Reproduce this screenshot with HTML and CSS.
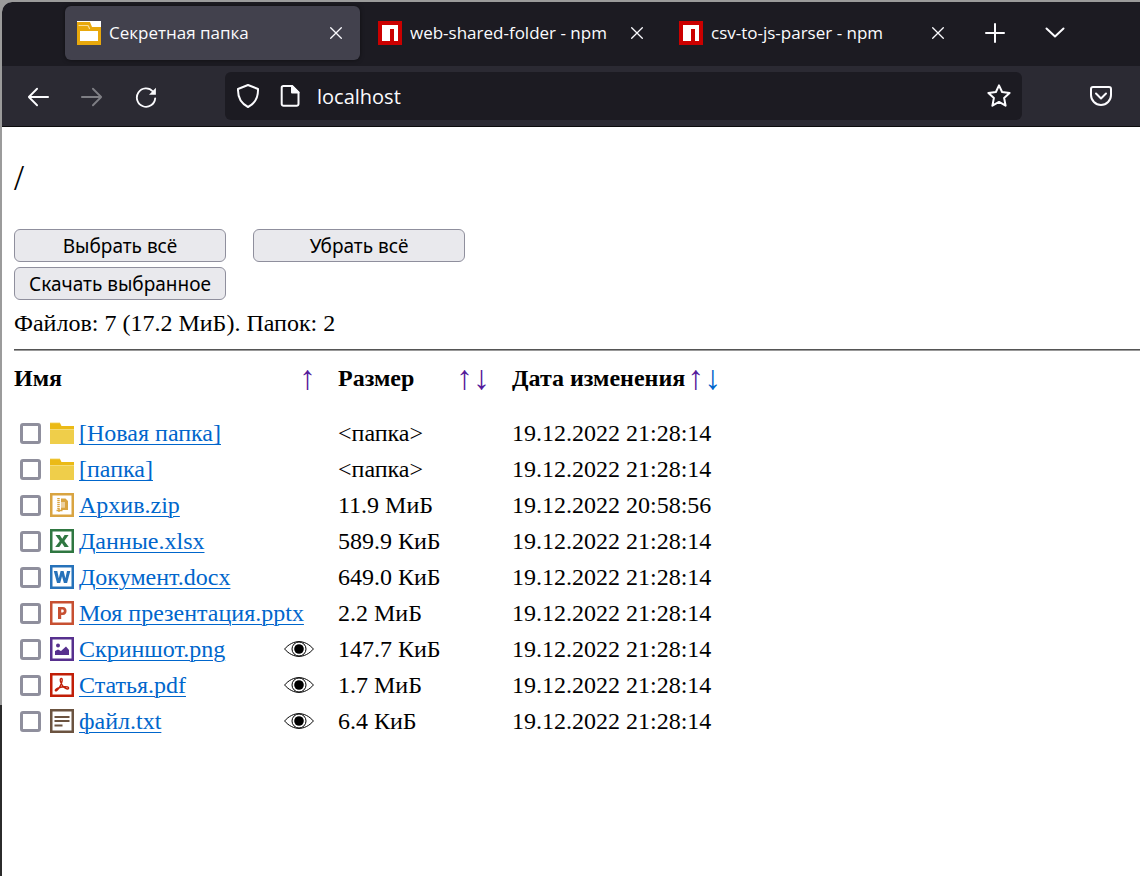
FILE: index.html
```
<!DOCTYPE html>
<html lang="ru">
<head>
<meta charset="utf-8">
<title>Секретная папка</title>
<link rel="stylesheet" href="styles.css">
</head>
<body>
<svg class="symbols" aria-hidden="true">
  <symbol id="close" viewBox="0 0 12 12"><path d="M.7.7l10.6 10.6M11.3.7L.7 11.3" stroke="currentColor" stroke-width="1.3" fill="none"/></symbol>
  <symbol id="npm" viewBox="0 0 24 24"><path fill="#cb0000" d="M0 0h24v24H0z"/><path fill="#fff" d="M4 4h16v16h-4V8h-4v12H4z"/></symbol>
  <symbol id="folder" viewBox="0 0 24 24"><path fill="#ebba16" d="M0 2h10l1.500 3H24v3H0z"/><path fill="#efce4a" d="M0 8.500h24V23H0z"/><path fill="#f5dc78" d="M0 8h24v1H0zM0 1.500h10v.8H0z"/></symbol>
  <symbol id="eye" viewBox="0 0 30 16"><path d="M.6 8C9-1.800 21-1.800 29.400 8 21 17.800 9 17.800.6 8z" fill="#fff" stroke="#000"/><circle cx="15" cy="8" r="7" fill="#fff" stroke="#000"/><circle cx="15" cy="8" r="4.800"/></symbol>
</svg>
<div class="window">
  <header class="chrome">
    <div class="tabs">
      <div class="tab active">
        <svg class="favicon" viewBox="0 0 24 24"><path fill="#fff" d="M0 0h24v24H0z"/><path fill="#e8a80c" d="M0 1h13l2 5h9v18H0z"/><path fill="#fff" d="M3 10h18v10H3z"/><path d="M2 4.500h9l1.500 3" fill="none" stroke="#f9de9a" stroke-width="1.200"/></svg>
        <span class="tab-title">Секретная папка</span>
        <button class="tab-close" aria-label="Закрыть вкладку"><svg><use href="#close"/></svg></button>
      </div>
      <div class="tab">
        <svg class="favicon"><use href="#npm"/></svg>
        <span class="tab-title">web-shared-folder - npm</span>
        <button class="tab-close" aria-label="Закрыть вкладку"><svg><use href="#close"/></svg></button>
      </div>
      <div class="tab">
        <svg class="favicon"><use href="#npm"/></svg>
        <span class="tab-title">csv-to-js-parser - npm</span>
        <button class="tab-close" aria-label="Закрыть вкладку"><svg><use href="#close"/></svg></button>
      </div>
      <button class="tab-tool" aria-label="Новая вкладка"><svg viewBox="0 0 24 24"><path d="M12 3v18M3 12h18"/></svg></button>
      <button class="tab-tool" aria-label="Список вкладок"><svg viewBox="0 0 24 24"><path d="M3.500 7.500l8.500 8 8.500-8"/></svg></button>
    </div>
    <div class="toolbar">
      <nav class="nav">
        <button class="tool" aria-label="Назад"><svg viewBox="0 0 24 24"><path d="M23 12H2M11 3l-9 9 9 9"/></svg></button>
        <button class="tool dim" aria-label="Вперёд"><svg viewBox="0 0 24 24"><path d="M1 12h21M13 3l9 9-9 9"/></svg></button>
        <button class="tool" aria-label="Обновить"><svg viewBox="0 0 24 24"><path d="M19.500 6A10 10 0 1 0 22 13.500"/><path d="M22.800 2v7.500h-7.500z" fill="currentColor" stroke="none"/></svg></button>
      </nav>
      <div class="urlbar">
        <svg class="glyph" viewBox="0 0 24 24"><path d="M12 1L22 5c.3 8-2 14-10 18C4 19 1.700 13 2 5z"/></svg>
        <svg class="glyph" viewBox="0 0 24 24"><path d="M5.500 2H14l6.500 6.500V20a1.800 1.800 0 0 1-1.800 1.800H5.500A1.800 1.800 0 0 1 3.700 20V3.800A1.800 1.800 0 0 1 5.500 2z"/><path d="M14 2v6.500h6.500z" fill="currentColor"/></svg>
        <input class="url" type="text" value="localhost" aria-label="Адрес">
        <button class="star" aria-label="Добавить в закладки"><svg class="glyph" viewBox="0 0 24 24"><path d="M12 1.300l3.100 6.700 7.500.9-5.500 5 1.500 7.800-6.600-3.800-6.600 3.800 1.500-7.800-5.500-5 7.500-.9z"/></svg></button>
      </div>
      <button class="pocket" aria-label="Pocket"><svg class="glyph" viewBox="0 0 24 24"><path d="M4 3h16a2 2 0 0 1 2 2v6a10 10 0 0 1-20 0V5a2 2 0 0 1 2-2z"/><path d="M7 9.500l5 5 5-5"/></svg></button>
    </div>
  </header>
  <main class="page">
    <h1 class="path">/</h1>
    <div class="actions">
      <button class="action">Выбрать всё</button>
      <button class="action">Убрать всё</button>
      <button class="action">Скачать выбранное</button>
    </div>
    <p class="summary">Файлов: 7 (17.2 МиБ). Папок: 2</p>
    <hr class="rule">
    <table class="files">
      <thead>
        <tr>
          <th class="col-name"><div class="head"><span>Имя</span><span class="sort"><a class="visited" href="#">↑</a></span></div></th>
          <th class="col-size"><div class="head"><span>Размер</span><span class="sort"><a class="visited" href="#">↑</a><a class="visited" href="#">↓</a></span></div></th>
          <th class="col-date"><div class="head"><span>Дата изменения</span><span class="sort"><a class="visited" href="#">↑</a><a href="#">↓</a></span></div></th>
        </tr>
      </thead>
      <tbody>
        <tr><td><div class="file"><input type="checkbox" aria-labelledby="f1"><svg class="type"><use href="#folder"/></svg><a id="f1" href="#">[Новая папка]</a></div></td><td>&lt;папка&gt;</td><td>19.12.2022 21:28:14</td></tr>
        <tr><td><div class="file"><input type="checkbox" aria-labelledby="f2"><svg class="type"><use href="#folder"/></svg><a id="f2" href="#">[папка]</a></div></td><td>&lt;папка&gt;</td><td>19.12.2022 21:28:14</td></tr>
        <tr><td><div class="file"><input type="checkbox" aria-labelledby="f3"><svg class="type framed zip" viewBox="0 0 24 24"><path class="frame" d="M1 1h22v22H1z"/><path d="M11 5.500h4.500l2.500 2.500v9h-7v-2.500h4V9h-4z" fill="currentColor"/><path d="M8.500 5v12" stroke="currentColor" stroke-width="2.500" stroke-dasharray="1.200 .8"/><path d="M6.500 17.500h6M9 16v3" stroke="currentColor" stroke-width="1.400"/><path d="M11 9h4v5.500h-4z" fill="currentColor" opacity=".5"/></svg><a id="f3" href="#">Архив.zip</a></div></td><td>11.9 МиБ</td><td>19.12.2022 20:58:56</td></tr>
        <tr><td><div class="file"><input type="checkbox" aria-labelledby="f4"><svg class="type framed xls" viewBox="0 0 24 24"><path class="frame" d="M1 1h22v22H1z"/><path d="M5.500 6h4.300l2.400 3.800L14.600 6h4l-4.300 5.900 4.500 6h-4.300l-2.600-3.900-2.600 3.900H5.200l4.600-6z" fill="currentColor"/></svg><a id="f4" href="#">Данные.xlsx</a></div></td><td>589.9 КиБ</td><td>19.12.2022 21:28:14</td></tr>
        <tr><td><div class="file"><input type="checkbox" aria-labelledby="f5"><svg class="type framed doc" viewBox="0 0 24 24"><path class="frame" d="M1 1h22v22H1z"/><path d="M3.800 6h3.500l1.500 7.300L10.600 6h3l1.800 7.300L17 6h3.300l-3.200 12h-3.200L12 11.200 10.200 18H7z" fill="currentColor"/></svg><a id="f5" href="#">Документ.docx</a></div></td><td>649.0 КиБ</td><td>19.12.2022 21:28:14</td></tr>
        <tr><td><div class="file"><input type="checkbox" aria-labelledby="f6"><svg class="type framed ppt" viewBox="0 0 24 24"><path class="frame" d="M1 1h22v22H1z"/><path d="M8 6h4.800c5 0 5 8 0 8h-1.600v4H8zm3.200 2.600v2.900h1.200c1.900 0 1.900-2.900 0-2.900z" fill="currentColor" fill-rule="evenodd"/></svg><a id="f6" href="#">Моя презентация.pptx</a></div></td><td>2.2 МиБ</td><td>19.12.2022 21:28:14</td></tr>
        <tr><td><div class="file"><input type="checkbox" aria-labelledby="f7"><svg class="type framed png" viewBox="0 0 24 24"><path class="frame" d="M1 1h22v22H1z"/><circle cx="8" cy="8.500" r="2" fill="currentColor"/><path d="M5 18v-4l3-1.500 3 1.500 5-4.500 3 3.500v5z" fill="currentColor"/></svg><a id="f7" href="#">Скриншот.png</a><a class="view" href="#" aria-label="Просмотр"><svg><use href="#eye"/></svg></a></div></td><td>147.7 КиБ</td><td>19.12.2022 21:28:14</td></tr>
        <tr><td><div class="file"><input type="checkbox" aria-labelledby="f8"><svg class="type framed pdf" viewBox="0 0 24 24"><path class="frame" d="M1 1h22v22H1z"/><path d="M11 5.500c2.200-.8 1 4.500-.8 7.500-1.600 3-3.900 5.700-4.800 4.600-.9-1.400 4.500-3.600 8.100-3.900 3-.3 5.500.2 5 1.800-.7 1.600-4.600-.6-6.200-3.200-1.700-2.700-3-6.200-1.300-6.800z" fill="none" stroke="currentColor" stroke-width="1.400"/></svg><a id="f8" href="#">Статья.pdf</a><a class="view" href="#" aria-label="Просмотр"><svg><use href="#eye"/></svg></a></div></td><td>1.7 МиБ</td><td>19.12.2022 21:28:14</td></tr>
        <tr><td><div class="file"><input type="checkbox" aria-labelledby="f9"><svg class="type framed txt" viewBox="0 0 24 24"><path class="frame" d="M1 1h22v22H1z"/><path d="M4.500 8h15M4.500 12h15M4.500 16.500h8" stroke="currentColor" stroke-width="1.800"/></svg><a id="f9" href="#">файл.txt</a><a class="view" href="#" aria-label="Просмотр"><svg><use href="#eye"/></svg></a></div></td><td>6.4 КиБ</td><td>19.12.2022 21:28:14</td></tr>
      </tbody>
    </table>
  </main>
</div>
</body>
</html>
```
FILE: styles.css
```
* { box-sizing: border-box; }
body {
  margin: 0;
  min-height: 100vh;
  padding: 2px 0 0 2px;
  display: flex;
  background: linear-gradient(#9b9b9b 705px, #2b2b2b 705px);
}
button { font: inherit; color: inherit; background: none; border: 0; padding: 0; }
.symbols { position: absolute; width: 0; height: 0; }
.window {
  flex: 1;
  min-width: 0;
  background: #fff;
  border-top-left-radius: 10px;
  overflow: hidden;
  font: 24px/28px "Liberation Serif", serif;
  color: #000;
}
.chrome { font: 17px/24px "Open Sans", "Noto Sans", sans-serif; color: #fbfbfe; }
.chrome svg { fill: none; stroke-linecap: round; stroke-linejoin: round; }
.tabs { display: flex; align-items: center; gap: 6px; height: 64px; padding: 0 0 2px 63px; background: #1c1b22; }
.tab { display: flex; align-items: center; flex: 0 1 295px; height: 54px; padding: 0 12px; border-radius: 6px; }
.tab.active { background: #42414d; box-shadow: 0 0 4px #00000080; }
.favicon { width: 24px; height: 24px; flex: none; margin-right: 8px; }
.tab-title { flex: 1; white-space: nowrap; overflow: hidden; }
.tab-close { width: 24px; height: 24px; display: grid; place-items: center; }
.tab-close svg { width: 12px; height: 12px; }
.tab-tool { width: 54px; height: 54px; display: grid; place-items: center; stroke: currentColor; stroke-width: 2; }
.tab-tool svg { width: 24px; height: 24px; }
.toolbar { display: flex; align-items: center; height: 61px; background: #2b2a33; border-bottom: 1px solid #0c0c0d; }
.nav { display: flex; width: 223px; padding: 2px 0 0 9px; }
.tool { width: 54px; height: 48px; display: grid; place-items: center; stroke: currentColor; stroke-width: 2; }
.tool svg { width: 22px; height: 22px; }
.dim { opacity: .4; }
.urlbar { display: flex; align-items: center; gap: 18px; flex: 1; min-width: 0; height: 48px; padding: 0 11px; background: #1c1b22; border-radius: 6px; }
.glyph { width: 24px; height: 24px; flex: none; stroke: currentColor; stroke-width: 2; }
.url { flex: 1; min-width: 0; margin-left: -3px; padding: 2px 0 0; border: 0; outline: 0; background: none; color: inherit; font: 20px/28px "Open Sans", "Noto Sans", sans-serif; }
.star { display: flex; }
.pocket { width: 118px; padding-left: 40px; display: grid; place-items: center; }
.page { padding: 31px 0 0 12px; }
.path { margin: 0 0 31px; font-size: 36px; line-height: 40px; font-weight: 400; }
.actions { display: grid; grid-template-columns: 212px 212px; gap: 5px 27px; }
.action { height: 33px; border: 1px solid #8f8f9d; border-radius: 6px; background: #e9e9ed; font: 19px/28px "Noto Sans", sans-serif; white-space: nowrap; }
.summary { margin: 9px 0 12px; }
.rule { margin: 0; height: 2px; border: 0; border-top: 1px solid #555; border-bottom: 1px solid #999; }
.files { border-collapse: collapse; margin-top: 9px; }
.files th, .files td { padding: 0; height: 36px; text-align: left; white-space: nowrap; }
.files th { height: 55px; padding-bottom: 19px; }
.col-name { width: 324px; }
.col-size { width: 174px; }
.head { display: flex; justify-content: space-between; gap: 2px; padding-right: 22px; }
.sort { display: flex; font-size: 34px; font-weight: 400; }
.sort a { text-decoration: none; }
.page a { color: #0066cc; }
.page a.visited { color: #551a9b; }
.file { display: flex; align-items: center; padding: 0 24px 0 6px; }
.file a { text-decoration-thickness: 1px; text-underline-offset: 3px; }
.file input { appearance: none; width: 21px; height: 21px; margin: 0 9px 0 0; border: 3px solid #8f8f9d; border-radius: 3px; background: #fff; }
.type { width: 24px; height: 24px; margin-right: 5px; }
.frame { fill: #fff; stroke: currentColor; stroke-width: 3; }
.zip { color: #d9a441; }
.xls { color: #2f7741; }
.doc { color: #2672ba; }
.ppt { color: #c75032; }
.png { color: #57308e; }
.pdf { color: #c11e07; }
.txt { color: #6b5340; }
.view { display: flex; margin-left: auto; }
.view svg { width: 30px; height: 16px; }
```
